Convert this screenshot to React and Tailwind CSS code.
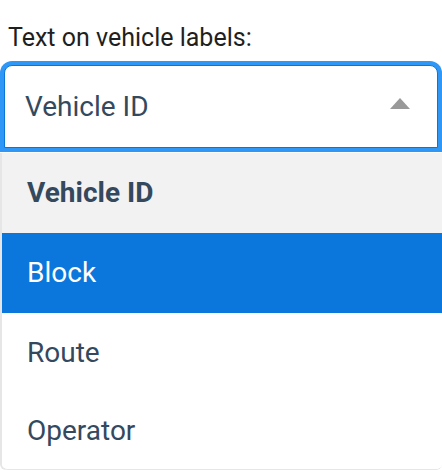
import React from "react";

export default function App() {
  const items = [
    { label: "Vehicle ID", bold: true, bg: "bg-[#f2f2f2]", color: "text-[#34495e]", h: "h-[80px]" },
    { label: "Block", bg: "bg-[#0b76db]", color: "text-white", h: "h-[80px]" },
    { label: "Route", bg: "bg-white", color: "text-[#34495e]", h: "h-[80px]" },
    { label: "Operator", bg: "bg-white", color: "text-[#34495e]", h: "h-[76px]" },
  ];
  return (
    <div
      className="w-[442px] h-[470px] overflow-hidden bg-white"
      style={{ fontFamily: "Roboto, 'Noto Sans', sans-serif" }}
    >
      <div className="pl-[8px] pt-[23px] text-[25px] leading-[30px] text-[#1f1f1f]">
        Text on vehicle labels:
      </div>
      <div className="mt-[8px] px-[4px] pt-[4px]">
        <div className="relative flex h-[83px] items-center rounded-t-[8px] border border-[#0b76da] bg-white pl-[20px] shadow-[0_0_0_4px_#2f97f6] text-[28px] text-[#34495e]">
          <span>Vehicle ID</span>
          <svg
            className="absolute right-[27px] top-[32px]"
            width="20"
            height="11"
            viewBox="0 0 20 11"
          >
            <polygon points="0,11 10,0 20,11" fill="#999999" />
          </svg>
        </div>
      </div>
      <div className="mt-[5px] ml-[2px] overflow-hidden rounded-b-[6px] border-b border-[#e6e6e6] shadow-[-2px_0_0_0_#e6e6e6]">
        {items.map((it) => (
          <div
            key={it.label}
            className={`flex ${it.h} items-center pl-[25px] text-[28px] ${it.bg} ${it.color} ${it.bold ? "font-bold" : ""}`}
          >
            {it.label}
          </div>
        ))}
      </div>
    </div>
  );
}
